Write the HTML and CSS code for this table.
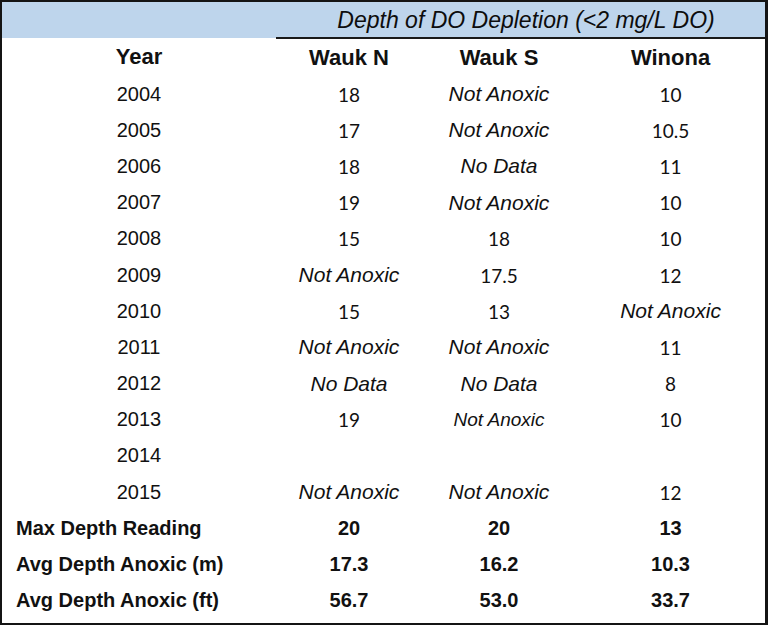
FILE: index.html
```html
<!DOCTYPE html>
<html>
<head>
<meta charset="utf-8">
<link rel="stylesheet" href="styles.css">
</head>
<body>
<div class="sheet">
<table class="grid">
  <colgroup>
    <col class="c-year">
    <col class="c-wn">
    <col class="c-ws">
    <col class="c-wi">
  </colgroup>
  <thead>
    <tr class="band">
      <th class="band-blank"></th>
      <th class="band-title" colspan="3">Depth of DO Depletion (&lt;2 mg/L DO)</th>
    </tr>
    <tr class="heads">
      <th>Year</th><th>Wauk N</th><th>Wauk S</th><th>Winona</th>
    </tr>
  </thead>
  <tbody>
    <tr><td class="yr">2004</td><td class="num">18</td><td class="na">Not Anoxic</td><td class="num">10</td></tr>
    <tr><td class="yr">2005</td><td class="num">17</td><td class="na">Not Anoxic</td><td class="num">10.5</td></tr>
    <tr><td class="yr">2006</td><td class="num">18</td><td class="na">No Data</td><td class="num">11</td></tr>
    <tr><td class="yr">2007</td><td class="num">19</td><td class="na">Not Anoxic</td><td class="num">10</td></tr>
    <tr><td class="yr">2008</td><td class="num">15</td><td class="num">18</td><td class="num">10</td></tr>
    <tr><td class="yr">2009</td><td class="na">Not Anoxic</td><td class="num">17.5</td><td class="num">12</td></tr>
    <tr><td class="yr">2010</td><td class="num">15</td><td class="num">13</td><td class="na">Not Anoxic</td></tr>
    <tr><td class="yr">2011</td><td class="na">Not Anoxic</td><td class="na">Not Anoxic</td><td class="num">11</td></tr>
    <tr><td class="yr">2012</td><td class="na">No Data</td><td class="na">No Data</td><td class="num">8</td></tr>
    <tr><td class="yr">2013</td><td class="num">19</td><td class="na small">Not Anoxic</td><td class="num">10</td></tr>
    <tr><td class="yr">2014</td><td></td><td></td><td></td></tr>
    <tr><td class="yr">2015</td><td class="na">Not Anoxic</td><td class="na">Not Anoxic</td><td class="num">12</td></tr>
    <tr class="sum"><td class="lbl">Max Depth Reading</td><td>20</td><td>20</td><td>13</td></tr>
    <tr class="sum"><td class="lbl">Avg Depth Anoxic (m)</td><td>17.3</td><td>16.2</td><td>10.3</td></tr>
    <tr class="sum"><td class="lbl">Avg Depth Anoxic (ft)</td><td>56.7</td><td>53.0</td><td>33.7</td></tr>
  </tbody>
</table>
</div>
</body>
</html>
```

FILE: styles.css
```css
html, body {
  margin: 0;
  padding: 0;
  background: #ffffff;
}

.sheet {
  width: 768px;
  height: 625px;
  box-sizing: border-box;
  border: 2px solid #141414;
  border-right-width: 3px;
  background: #ffffff;
  overflow: hidden;
}

.grid {
  width: 763px;
  border-collapse: collapse;
  table-layout: fixed;
  font-family: "Liberation Sans", Arial, sans-serif;
  color: #111111;
}

.c-year { width: 274px; }
.c-wn { width: 146px; }
.c-ws { width: 154px; }
.c-wi { width: 189px; }

th, td {
  padding: 0;
  text-align: center;
  vertical-align: middle;
  white-space: nowrap;
}

.band {
  height: 36px;
  background: #bed5ec;
}

.band-title {
  font-style: italic;
  font-weight: normal;
  font-size: 23px;
  color: #0d0d0d;
  border-bottom: 2px solid #1a1a1a;
  vertical-align: bottom;
  padding: 0 0 3px 11px;
}

.heads {
  height: 38px;
}

.heads th {
  font-weight: bold;
  font-size: 22px;
}

tbody tr {
  height: 36.2px;
}

.yr {
  font-size: 20px;
}

.num {
  font-family: "Lato", "Liberation Sans", sans-serif;
  font-size: 19px;
}

.na {
  font-style: italic;
  font-size: 21px;
}

.na.small {
  font-size: 19px;
}

.sum td {
  font-weight: bold;
  font-size: 20px;
}

.sum .lbl {
  text-align: left;
  padding-left: 14px;
}
```
